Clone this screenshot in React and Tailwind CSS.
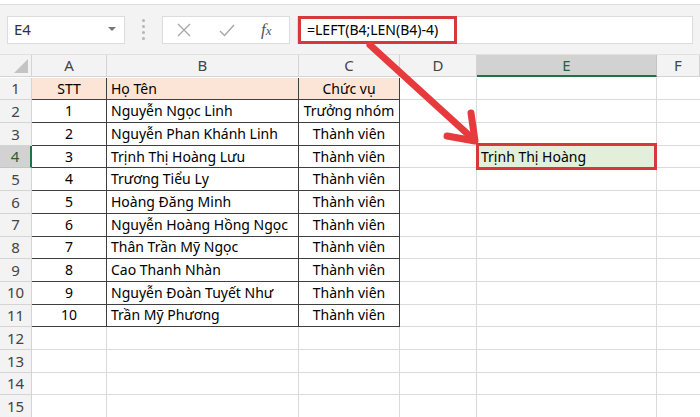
import React from "react";

const rows = [
  ["STT", "Họ Tên", "Chức vụ"],
  ["1", "Nguyễn Ngọc Linh", "Trưởng nhóm"],
  ["2", "Nguyễn Phan Khánh Linh", "Thành viên"],
  ["3", "Trịnh Thị Hoàng Lưu", "Thành viên"],
  ["4", "Trương Tiểu Ly", "Thành viên"],
  ["5", "Hoàng Đăng Minh", "Thành viên"],
  ["6", "Nguyễn Hoàng Hồng Ngọc", "Thành viên"],
  ["7", "Thân Trần Mỹ Ngọc", "Thành viên"],
  ["8", "Cao Thanh Nhàn", "Thành viên"],
  ["9", "Nguyễn Đoàn Tuyết Như", "Thành viên"],
  ["10", "Trần Mỹ Phương", "Thành viên"],
  ["", "", ""],
  ["", "", ""],
  ["", "", ""],
  ["", "", ""],
];

const cols = ["A", "B", "C", "D", "E", "F"];

const FormulaBar = () => (
  <div className="h-[50px] bg-[#f3f3f3] flex items-center px-[7px] gap-0 border-b border-[#e1e1e1]">
    <div className="w-[118px] h-[28px] bg-white border border-[#dcdcdc] flex items-center justify-between pl-[6px] pr-[8px]">
      <span className="text-[15px] text-[#333]">E4</span>
      <svg width="8" height="5" viewBox="0 0 8 5">
        <path d="M0 0 L8 0 L4 4 Z" fill="#777" />
      </svg>
    </div>
    <div className="w-[37px] flex flex-col items-center gap-[3px]">
      <span className="w-[3px] h-[3px] bg-[#b5b5b5] rounded-full" />
      <span className="w-[3px] h-[3px] bg-[#b5b5b5] rounded-full" />
      <span className="w-[3px] h-[3px] bg-[#b5b5b5] rounded-full" />
      <span className="w-[3px] h-[3px] bg-[#b5b5b5] rounded-full" />
    </div>
    <div className="w-[128px] h-[28px] bg-white border border-[#dcdcdc] flex items-center">
      <svg width="14" height="14" viewBox="0 0 14 14" className="ml-[14px]">
        <path d="M1 1 L13 13 M13 1 L1 13" stroke="#a6a6a6" strokeWidth="1.3" />
      </svg>
      <svg width="16" height="14" viewBox="0 0 16 14" className="ml-[28px]">
        <path d="M1 8 L5.5 12.5 L15 2" stroke="#a6a6a6" strokeWidth="1.4" fill="none" />
      </svg>
      <span className="ml-[26px] text-[17px] italic text-[#555] font-['Liberation_Serif',serif]">
        f<span className="text-[13px]">x</span>
      </span>
    </div>
    <div className="flex-1 h-[28px] bg-white border border-[#dcdcdc] ml-[7px] flex items-center">
      <div className="h-[28px] w-[159px] border-[3px] border-[#d6383c] flex items-center pl-[6px] text-[14px] text-black">
        =LEFT(B4;LEN(B4)-4)
      </div>
    </div>
  </div>
);

const Arrow = () => (
  <svg className="absolute left-0 top-0 pointer-events-none" width="700" height="417" viewBox="0 0 700 417">
    <g stroke="#e63a3d" strokeWidth="7" strokeLinecap="round" strokeLinejoin="round" fill="none">
      <path d="M370 45 L472 138" />
      <path d="M447 136 L475 141 L471 113" />
    </g>
  </svg>
);

const App = () => {
  return (
    <div className="relative w-[700px] h-[417px] overflow-hidden bg-white font-['Noto_Sans',sans-serif]">
      <div className="h-[5px] bg-white border-b border-[#dedede]" />
      <FormulaBar />
      <div className="grid grid-cols-[32px_75px_192px_101px_77px_180px_43px] auto-rows-[22.7px]">
        {/* column headers */}
        <div className="h-[22px] bg-[#f3f3f3] border-r border-b border-[#d4d4d4] flex items-end justify-end p-[3px]">
          <svg width="14" height="14" viewBox="0 0 14 14">
            <path d="M14 0 L14 14 L0 14 Z" fill="#c4c4c4" />
          </svg>
        </div>
        {cols.map((c) => (
          <div
            key={c}
            className={
              c === "E"
                ? "h-[22px] bg-[#d2d2d2] border-r border-[#c4c4c4] border-b-2 border-b-[#217346] flex items-center justify-center text-[15px] text-[#2b5e3f]"
                : "h-[22px] bg-[#f3f3f3] border-r border-b border-[#d4d4d4] flex items-center justify-center text-[15px] text-[#444]"
            }
          >
            {c}
          </div>
        ))}
        {rows.map((r, i) => {
          const n = i + 1;
          const inTable = n <= 11;
          const head = n === 1;
          const base = "border-b text-[14px] text-black flex items-center leading-none whitespace-nowrap";
          const tb = inTable ? "border-b-[#3f3f3f]" : "border-b-[#dadada]";
          const fill = head ? "bg-[#fce4d6]" : "bg-white";
          return (
            <React.Fragment key={n}>
              <div
                className={
                  n === 4
                    ? "bg-[#d2d2d2] border-b border-[#c4c4c4] border-r-2 border-r-[#217346] flex items-center justify-center text-[15px] text-[#2b5e3f]"
                    : "bg-[#f3f3f3] border-r border-b border-[#d4d4d4] flex items-center justify-center text-[15px] text-[#444]"
                }
              >
                {n}
              </div>
              <div className={`${base} ${tb} ${fill} border-r justify-center ${inTable ? "border-r-[#3f3f3f]" : "border-r-[#dadada]"}`}>
                {r[0]}
              </div>
              <div className={`${base} ${tb} ${fill} border-r pl-[4px] ${inTable ? "border-r-[#3f3f3f]" : "border-r-[#dadada]"}`}>
                {r[1]}
              </div>
              <div className={`${base} ${tb} ${fill} border-r justify-center ${inTable ? "border-r-[#3f3f3f]" : "border-r-[#dadada]"}`}>
                {r[2]}
              </div>
              <div className="border-r border-b border-[#dadada]" />
              {n === 4 ? (
                <div className="relative border-r border-b border-[#dadada]">
                  <div className="absolute -top-[3px] -left-[1px] w-[181px] h-[27px] border-[3px] border-[#d6383c] bg-[#e2efda] flex items-center pl-[2px] text-[14px] text-black whitespace-nowrap">
                    Trịnh Thị Hoàng
                  </div>
                </div>
              ) : (
                <div className="border-r border-b border-[#dadada]" />
              )}
              <div className="border-b border-[#dadada]" />
            </React.Fragment>
          );
        })}
      </div>
      <Arrow />
    </div>
  );
};

export default App;
